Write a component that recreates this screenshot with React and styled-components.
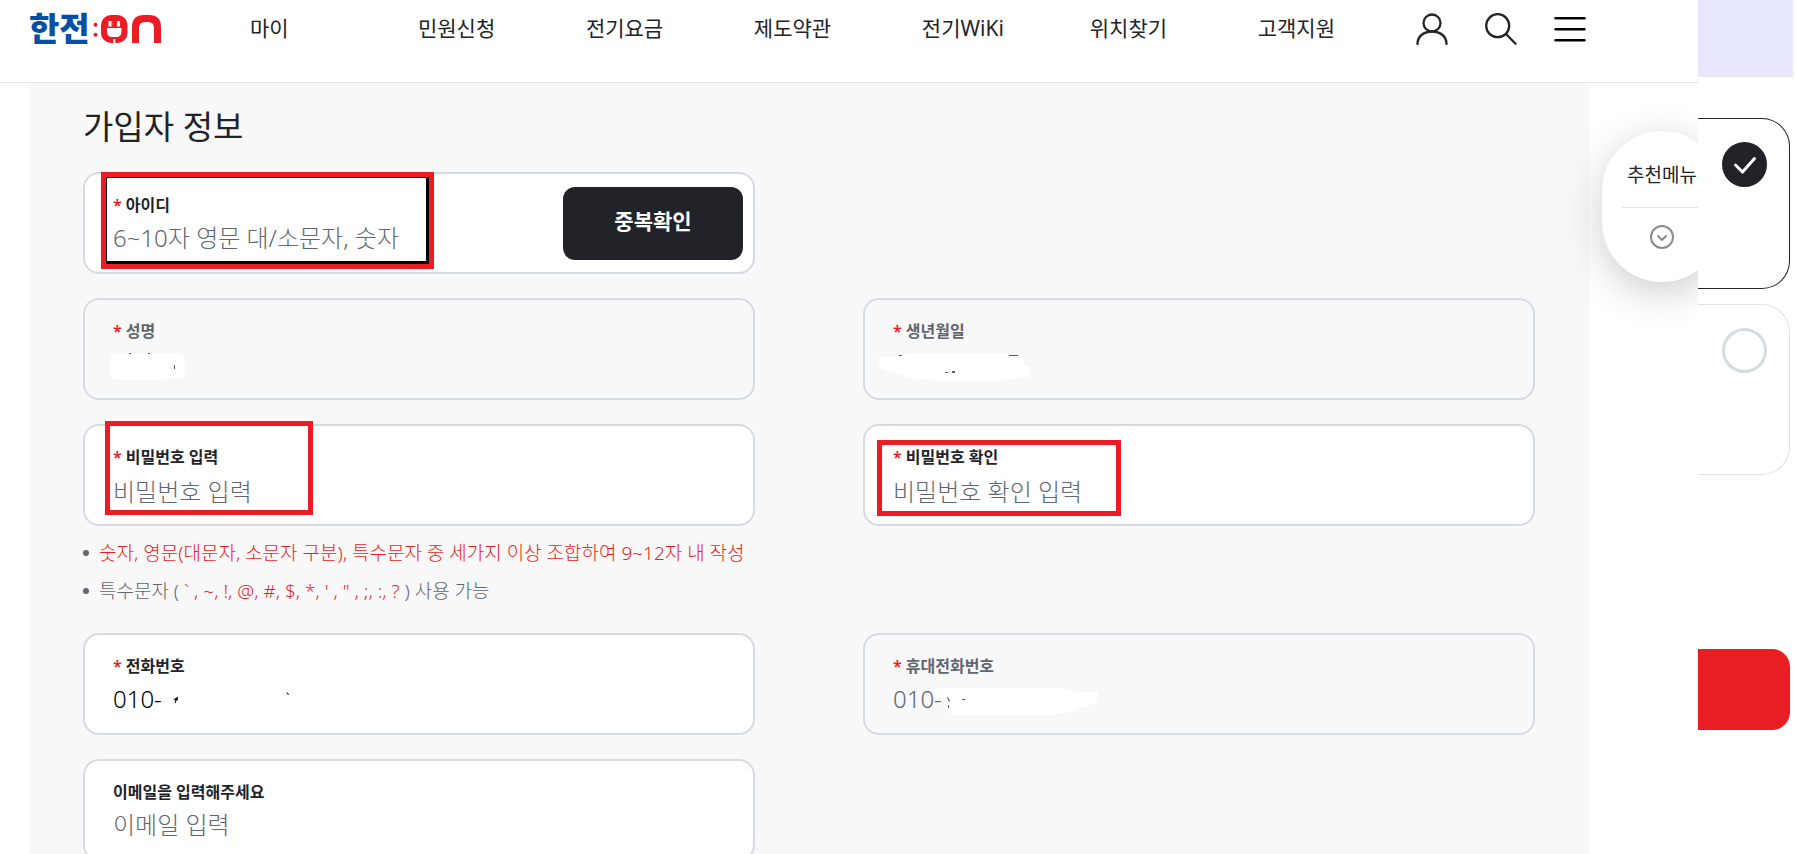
import React from "react";
import styled, { createGlobalStyle, css } from "styled-components";

const INK = "#222329";
const MUTED = "#60666f";
const LINE = "#d6dae3";
const RED = "#e81e23";
const MARK = "#ed1c24";

const GlobalStyle = createGlobalStyle`
  *, *::before, *::after { box-sizing: border-box; }
  body { margin: 0; background: #fff; }
  body, button, input {
    font-family: "Noto Sans", "Noto Sans CJK KR", sans-serif;
    color: ${INK};
  }
`;

const Page = styled.div`
  display: flex;
  height: 100vh;
  overflow: hidden;
`;

const Main = styled.div`
  position: relative;
  flex: 1;
  min-width: 0;
  overflow: hidden;
`;

const Header = styled.header`
  display: flex;
  align-items: center;
  height: 83px;
  padding: 0 112px 24px 29px;
  border-bottom: 1px solid #e1e4ee;
  background: #fff;
`;

const Logo = styled.a`
  display: flex;
  align-items: center;
  justify-content: space-between;
  width: 132px;
  color: #0550a5;
  font-size: 33px;
  font-weight: 900;
  line-height: 32px;
  text-decoration: none;
  white-space: nowrap;
`;

const Nav = styled.nav`
  flex: 1;
  display: grid;
  grid-template-columns: repeat(6, 1fr) auto;
  margin: 0 81px 0 89px;
`;

const NavLink = styled.a`
  padding-bottom: 2px;
  color: ${INK};
  font-size: 21px;
  line-height: 32px;
  text-decoration: none;
  white-space: nowrap;
`;

const Tools = styled.div`
  display: flex;
  align-items: center;
  gap: 37px;
`;

const IconButton = styled.button`
  display: flex;
  padding: 0;
  border: 0;
  background: none;
  cursor: pointer;
`;

const Panel = styled.main`
  min-height: 100vh;
  margin: 0 109px 0 29px;
  padding: 20px 54px;
  background: #f8f8f8;
`;

const Title = styled.h1`
  margin: 0 0 21px;
  font-size: 33px;
  font-weight: 400;
  line-height: 48px;
`;

const Rows = styled.form`
  display: grid;
  grid-template-columns: 1fr 1fr;
  gap: 24px 108px;
`;

const Card = styled.div`
  position: relative;
  grid-column: ${(p) => (p.$alone ? "1" : "auto")};
  display: flex;
  align-items: center;
  gap: 16px;
  height: 102px;
  padding: 0 10px 0 28px;
  border: 2px solid ${LINE};
  border-radius: 16px;
  background: ${(p) => (p.$locked ? "transparent" : "#fff")};
`;

const Stack = styled.div`
  flex: 1;
  min-width: 0;
  display: flex;
  flex-direction: column;
  padding-top: 3px;
`;

const Label = styled.label`
  color: ${(p) => (p.$locked ? MUTED : INK)};
  font-size: 16px;
  font-weight: 600;
  line-height: 24px;
`;

const Star = styled.span`
  margin-right: 4px;
  color: ${RED};
`;

const Input = styled.input`
  width: 100%;
  height: 40px;
  padding: ${(p) => (p.type === "password" ? "6px 0 0" : "2px 0 0")};
  border: 0;
  outline: 0;
  background: none;
  color: ${(p) => (p.disabled ? MUTED : "#000")};
  font-size: 24px;
  font-weight: 300;
  &::placeholder { color: ${MUTED}; opacity: 1; }
`;

const CheckButton = styled.button`
  width: 180px;
  height: 73px;
  padding: 0 0 6px;
  border: 0;
  border-radius: 12px;
  background: ${INK};
  color: #fff;
  font-size: 21px;
  font-weight: 700;
`;

const boxes = {
  id: css`left: 16px; top: -2px; width: 333px; height: 97px;`,
  password: css`left: 20px; top: -5px; width: 208px; height: 94px;`,
  confirm: css`left: 12px; top: 14px; width: 244px; height: 76px;`,
};

const Highlight = styled.span`
  position: absolute;
  ${(p) => boxes[p.$at]}
  border: 5px solid ${MARK};
  pointer-events: none;
  ${(p) => p.$at === "id" && css`box-shadow: inset 1px 1px #000, inset -3px -3px #000;`}
`;

const Smear = styled.svg`
  position: absolute;
  left: 0;
  top: 49px;
  pointer-events: none;
`;

const Notes = styled.ul`
  grid-column: 1 / -1;
  margin: -16px 0 -1px;
  padding: 0;
  list-style: none;
`;

const Note = styled.li`
  display: flex;
  align-items: center;
  gap: 10px;
  color: ${(p) => (p.$red ? RED : MUTED)};
  font-size: 19px;
  font-weight: 300;
  line-height: 38px;
  white-space: nowrap;
  &::before {
    content: "";
    width: 6px;
    height: 6px;
    border-radius: 50%;
    background: ${MUTED};
  }
`;

const Red = styled.span`
  color: ${RED};
`;

const Quick = styled.aside`
  position: absolute;
  top: 131px;
  right: -24px;
  display: flex;
  flex-direction: column;
  align-items: center;
  width: 120px;
  height: 151px;
  padding: 27px 20px;
  border-radius: 60px;
  background: #fff;
  box-shadow: 0 10px 40px rgba(0, 0, 0, 0.2);
`;

const QuickTitle = styled.strong`
  align-self: stretch;
  display: flex;
  justify-content: center;
  margin-bottom: 17px;
  padding: 1px 0 16px;
  border-bottom: 1px solid #dfe6f2;
  font-size: 19px;
  font-weight: 400;
  line-height: 32px;
  white-space: nowrap;
`;

const Side = styled.aside`
  display: flex;
  flex-direction: column;
  width: 98px;
  padding-right: 6px;
`;

const Banner = styled.div`
  flex: none;
  height: 77px;
  margin: 0 -3px 41px 0;
  background: #e7e7fd;
`;

const Option = styled.label`
  display: flex;
  justify-content: flex-end;
  align-items: flex-start;
  height: 171px;
  margin-bottom: 15px;
  padding: 23px 22px;
  border: 1px solid ${(p) => (p.$on ? INK : "#dfe1ea")};
  border-left: 0;
  border-radius: 0 28px 28px 0;
`;

const Radio = styled.input`
  appearance: none;
  width: 45px;
  height: 45px;
  margin: 0;
  border: 3px solid ${LINE};
  border-radius: 50%;
  &:checked {
    border-color: ${INK};
    background: ${INK} url("data:image/svg+xml,%3Csvg xmlns='http://www.w3.org/2000/svg' viewBox='0 0 39 39' fill='none' stroke='white' stroke-width='3' stroke-linecap='round' stroke-linejoin='round'%3E%3Cpath d='M10.500 20l7 7L29.500 13.500'/%3E%3C/svg%3E") center / 39px 39px no-repeat;
  }
`;

const Submit = styled.button`
  height: 81px;
  margin-top: 159px;
  border: 0;
  border-radius: 0 18px 18px 0;
  background: ${RED};
`;

const nav = ["마이", "민원신청", "전기요금", "제도약관", "전기WiKi", "위치찾기", "고객지원"];

function Field({ id, label, required = true, locked, alone, type = "text", placeholder, value, children, button }) {
  return (
    <Card $locked={locked} $alone={alone}>
      <Stack>
        <Label htmlFor={id} $locked={locked}>
          {required && <Star>*</Star>}
          {label}
        </Label>
        <Input id={id} type={type} placeholder={placeholder} defaultValue={value} disabled={locked} />
      </Stack>
      {button}
      {children}
    </Card>
  );
}

export default function App() {
  return (
    <Page>
      <GlobalStyle />
      <Main>
        <Header>
          <Logo href="#" aria-label="한전:ON">
            한전
            <svg width="69" height="28" viewBox="0 0 69 28" fill={MARK} aria-hidden="true">
              <circle cx="3.500" cy="9.700" r="2" />
              <circle cx="3.500" cy="19.700" r="2" />
              <rect x="9" y="0" width="26.500" height="28" rx="10" />
              <g fill="#fff">
                <path d="M16.500 6h3v5.500h-3zM20.700 6h3v5.500h-3zM24.900 6h3v5.500h-3z" />
                <path d="M15 13h14.500v3q0 6-5 6h-4.500q-5 0-5-6z" />
                <path d="M21.300 24h2v4h-2z" />
              </g>
              <path d="M20.500 5h3.500v7h-3.500z" />
              <path d="M40 28V12Q40 0 52 0H57Q69 0 69 12V28H62V13Q62 7 56 7H53Q47 7 47 13V28z" />
            </svg>
          </Logo>
          <Nav>
            {nav.map((n) => (
              <NavLink href="#" key={n}>{n}</NavLink>
            ))}
          </Nav>
          <Tools>
            <IconButton aria-label="내 정보">
              <svg width="32" height="32" viewBox="0 0 32 32" fill="none" stroke={INK} strokeWidth="2.300" strokeLinecap="round">
                <circle cx="16" cy="10" r="8.500" />
                <path d="M1.500 31C1.500 23 8 18.500 16 18.500S30.500 23 30.500 31" />
              </svg>
            </IconButton>
            <IconButton aria-label="검색">
              <svg width="32" height="32" viewBox="0 0 32 32" fill="none" stroke={INK} strokeWidth="2.300" strokeLinecap="round">
                <circle cx="12.700" cy="12.700" r="11.500" />
                <path d="M21 21l9.500 9.700" />
              </svg>
            </IconButton>
            <IconButton aria-label="전체 메뉴">
              <svg width="32" height="32" viewBox="0 0 32 32" stroke="#000" strokeWidth="2.500" strokeLinecap="round">
                <path d="M1.500 5.300h29M1.500 16.200h29M1.500 27.200h29" />
              </svg>
            </IconButton>
          </Tools>
        </Header>

        <Panel>
          <Title>가입자 정보</Title>
          <Rows>
            <Field id="uid" label="아이디" alone placeholder="6~10자 영문 대/소문자, 숫자" button={<CheckButton type="button">중복확인</CheckButton>}>
              <Highlight $at="id" />
            </Field>
            <Field id="name" label="성명" locked alone>
              <Smear width="160" height="40" viewBox="0 0 160 40" aria-hidden="true">
                <path fill="#fff" d="M24 5L76 4Q96 3 99 9L100 16V29L82 29 79 31H37Q25 30 25 26z" />
                <path fill="#555b66" d="M89 16h1v4h-1zM44 4h2v1h-2zM63 4h2v1h-2z" />
              </Smear>
            </Field>
            <Field id="birth" label="생년월일" locked>
              <Smear width="180" height="40" viewBox="0 0 180 40" aria-hidden="true">
                <path fill="#fff" d="M13 9L38 7 48 4H143L144 7H158L159 16 165 18V28L148 29 138 32H68L62 29 53 31 46 29 31 24 19 21 13 18z" />
                <path fill="#555b66" d="M34 6h3v1h-3zM144 6h9v1h-9zM87 22h3v2h-3zM80 23h3v1h-3z" />
              </Smear>
            </Field>
            <Field id="pw" label="비밀번호 입력" type="password" placeholder="비밀번호 입력">
              <Highlight $at="password" />
            </Field>
            <Field id="pw2" label="비밀번호 확인" type="password" placeholder="비밀번호 확인 입력">
              <Highlight $at="confirm" />
            </Field>
            <Notes>
              <Note $red>숫자, 영문(대문자, 소문자 구분), 특수문자 중 세가지 이상 조합하여 9~12자 내 작성</Note>
              <Note>
                <span>특수문자 (<Red> ` , ~, !, @, #, $, *, ' , " , ;, :, ? </Red>) 사용 가능</span>
              </Note>
            </Notes>
            <Field id="tel" label="전화번호" value="010-">
              <Smear width="220" height="40" viewBox="0 0 220 40" aria-hidden="true">
                <path fill="#222" d="M88 16l4-3h1v3l-2 1v2h-1v-3zM201 8l2 1 1 2h-1z" />
              </Smear>
            </Field>
            <Field id="mobile" label="휴대전화번호" locked value="010-">
              <Smear width="240" height="40" viewBox="0 0 240 40" aria-hidden="true">
                <path fill="#fff" d="M68 4L196 4 207 6 212 8H233V19L213 24V27L190 30 186 31H88Q84 30 84 25L81 13H69z" />
                <path fill="#555b66" d="M97 15h3v1h-3zM82 13h1l2 4-1 1zM83 21h1v3h-1z" />
              </Smear>
            </Field>
            <Field id="email" label="이메일을 입력해주세요" required={false} alone placeholder="이메일 입력" />
          </Rows>
        </Panel>

        <Quick>
          <QuickTitle>추천메뉴</QuickTitle>
          <IconButton aria-label="펼치기">
            <svg width="24" height="24" viewBox="0 0 24 24" fill="none" stroke="#8a8a8a" strokeWidth="2" strokeLinecap="round" strokeLinejoin="round">
              <circle cx="12" cy="12" r="11" />
              <path d="M8 11l4 4 4-4" />
            </svg>
          </IconButton>
        </Quick>
      </Main>

      <Side>
        <Banner />
        <Option $on>
          <Radio type="radio" name="member" aria-label="선택 1" defaultChecked />
        </Option>
        <Option>
          <Radio type="radio" name="member" aria-label="선택 2" />
        </Option>
        <Submit aria-label="다음" />
      </Side>
    </Page>
  );
}
